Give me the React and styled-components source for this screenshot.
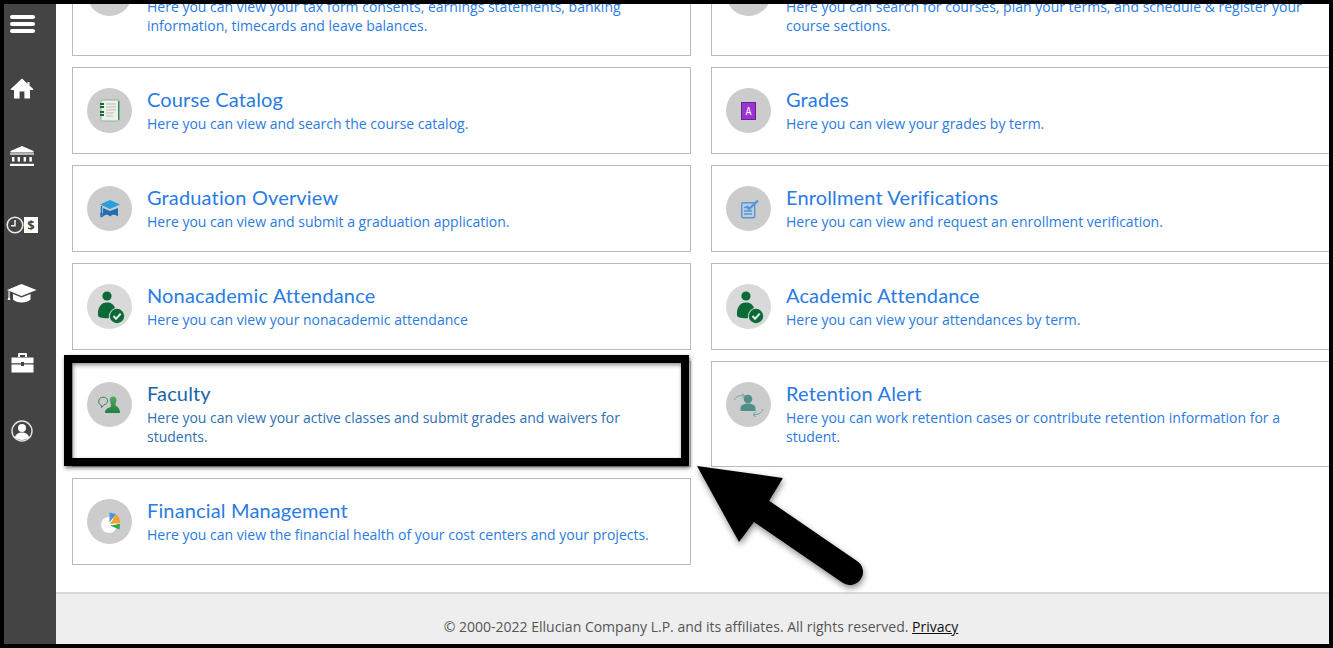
import React from "react";
import styled, { createGlobalStyle } from "styled-components";

const Global = createGlobalStyle`
  html, body { margin: 0; padding: 0; background: #000; }
  * { box-sizing: border-box; }
`;

const Frame = styled.div`
  position: relative;
  width: 1333px;
  height: 648px;
  border: 4px solid #000;
  display: flex;
  overflow: hidden;
  background: #fff;
  font-family: "Open Sans", "Liberation Sans", sans-serif;
`;

const Sidebar = styled.nav`
  width: 52px;
  flex: none;
  background: #444;
  display: flex;
  flex-direction: column;
`;

const MenuButton = styled.div`
  height: 50px;
  padding: 11px 0 0 6px;
  display: flex;
  flex-direction: column;
  gap: 3px;
`;

const MenuBar = styled.span`
  display: block;
  width: 25px;
  height: 4px;
  border-radius: 2px;
  background: #fff;
`;

const NavItem = styled.div`
  height: 68.6px;
  flex: none;
  padding-right: 16px;
  display: flex;
  align-items: center;
  justify-content: center;
  svg { display: block; flex: none; }
`;

const Main = styled.main`
  flex: 1;
  min-width: 0;
  display: flex;
  flex-direction: column;
  overflow: hidden;
`;

const Scroller = styled.div`
  flex: 1;
  min-height: 0;
  overflow: hidden;
`;

const Grid = styled.div`
  margin-top: -54px;
  padding-left: 16px;
  display: grid;
  grid-template-columns: 619px 619px;
  column-gap: 20px;
  row-gap: 11px;
  align-items: start;
`;

const Card = styled.a`
  position: relative;
  display: flex;
  gap: 15px;
  padding: 20px 14px;
  border: 1px solid #bbb;
  background: #fff;
  text-decoration: none;

  ${(p) =>
    p.$marked &&
    `
    &::after {
      content: "";
      box-sizing: border-box;
      position: absolute;
      left: -9px;
      top: -7px;
      width: 625px;
      height: 111px;
      border: 8.5px solid #000;
      box-shadow: 1px 2px 4px rgba(0,0,0,.55), inset 1px 2px 4px rgba(0,0,0,.45);
      pointer-events: none;
    }
  `}
`;

const IconCircle = styled.div`
  width: 45px;
  height: 45px;
  flex: none;
  border-radius: 50%;
  background: ${(p) => p.$bg || "#cccccc"};
  svg { display: block; }
`;

const CardText = styled.div`
  min-width: 0;
  flex: 1;
`;

const CardTitle = styled.div`
  font-family: Lato, "Open Sans", sans-serif;
  font-size: 20px;
  font-weight: 400;
  line-height: 22px;
  margin-bottom: 4px;
  letter-spacing: 0.15px;
  color: ${(p) => (p.$dim ? "#1a64a8" : "#2a7be4")};
`;

const CardDesc = styled.div`
  font-size: 14px;
  line-height: 19px;
  color: ${(p) => (p.$dim ? "#2f6fb4" : "#2b7be0")};
`;

const Footer = styled.footer`
  flex: none;
  height: 52px;
  background: #eee;
  border-top: 2px solid #d9d9d9;
  padding: 23px 0 0 17px;
  text-align: center;
  font-size: 14px;
  line-height: 19px;
  color: #555;
`;

const PrivacyLink = styled.a`
  color: #111;
  text-decoration: underline;
`;

const ArrowDrawing = styled.svg`
  position: absolute;
  left: 692px;
  top: 458px;
  width: 180px;
  height: 130px;
  overflow: visible;
  filter: drop-shadow(1px 3px 3px rgba(0, 0, 0, 0.45));
`;

const Nav = {
  Home: () => (
    <svg width="24" height="21" viewBox="0 0 24 21" fill="#fff">
      <path d="M12 0.5 L0.8 11 Q0.5 11.8 1.2 12 H4 V20.5 H9.6 V13.5 H14.4 V20.5 H20 V12 H22.8 Q23.5 11.8 23.2 11 L19.5 7.5 V4 H17.5 V5.7Z" />
    </svg>
  ),
  Bank: () => (
    <svg width="26" height="21" viewBox="0 0 26 21" fill="#fff">
      <path d="M13 0 L24.5 5 V6.4 H1.5 V5Z" />
      <rect x="1" y="7.4" width="24" height="1.2" />
      <rect x="3" y="11" width="2.4" height="4.6" />
      <rect x="8.6" y="11" width="2.4" height="4.6" />
      <rect x="14.6" y="11" width="2.4" height="4.6" />
      <rect x="20.4" y="11" width="2.4" height="4.6" />
      <rect x="1" y="17.8" width="24" height="2.2" />
    </svg>
  ),
  Pay: () => (
    <svg width="32" height="18" viewBox="0 0 32 18">
      <circle cx="9" cy="9" r="7.8" fill="none" stroke="#e8e8e8" strokeWidth="1.6" />
      <path d="M9 4 V9.8 H5" fill="none" stroke="#e8e8e8" strokeWidth="1.6" />
      <rect x="18" y="1" width="14" height="16" fill="#fff" />
      <text x="25" y="14" textAnchor="middle" fontSize="13" fontWeight="700" fontFamily="Open Sans" fill="#444">$</text>
    </svg>
  ),
  Cap: () => (
    <svg width="30" height="20" viewBox="0 0 30 20" fill="#fff">
      <path d="M14.5 0 L29.5 6 L14.5 12 L0 6Z" />
      <path d="M6 10 L14.5 13.6 L23.5 10 V15.5 C20 19.5 9.5 19.5 6 15.5Z" />
      <path d="M1.5 7 L2.6 7.4 V13 L3.4 16 H0.6 L1.5 13Z" />
    </svg>
  ),
  Case: () => (
    <svg width="23" height="20" viewBox="0 0 23 20" fill="#fff">
      <path d="M7 4 V1.2 Q7 0 8.2 0 H14.8 Q16 0 16 1.2 V4 H14 V2 H9 V4Z" />
      <path d="M0.5 4.5 H22.5 V10.3 H13 V9 H10 V10.3 H0.5Z" />
      <path d="M0.5 11.5 H10 V13 H13 V11.5 H22.5 V19.5 H0.5Z" />
    </svg>
  ),
  User: () => (
    <svg width="22" height="22" viewBox="0 0 22 22">
      <circle cx="11" cy="11" r="10" fill="none" stroke="#e4e4e4" strokeWidth="1.4" />
      <circle cx="11" cy="8" r="4" fill="#fff" />
      <path d="M3.8 17.5 C5 13.5 8 12.5 11 12.5 C14 12.5 17 13.5 18.2 17.5 C14.5 20.8 7.5 20.8 3.8 17.5Z" fill="#fff" />
    </svg>
  ),
};

const Art = ({ children }) => (
  <svg width="45" height="45" viewBox="0 0 45 45">{children}</svg>
);

const Icons = {
  Money: () => <Art />,
  Register: () => <Art />,
  Catalog: () => (
    <Art>
      <rect x="14" y="12" width="18" height="21" rx="1.5" fill="#eef1ea" stroke="#8cb596" strokeWidth="1" />
      <rect x="31" y="13" width="1.3" height="19" fill="#2e8b57" />
      <path d="M13 16 H17 M13 19 H17 M13 24 H17 M13 27 H17" stroke="#146b34" strokeWidth="2" />
      <path d="M19 16 H29 M19 19 H29 M19 22 H29 M19 25 H27 M19 28 H26" stroke="#b9bdb9" strokeWidth="1" />
    </Art>
  ),
  Grades: () => (
    <Art>
      <rect x="15.5" y="14.5" width="14" height="17" fill="#9a33cf" stroke="#6a1f9a" strokeWidth="1" />
      <text x="22.5" y="27" textAnchor="middle" fontSize="10" fontFamily="DejaVu Sans Mono" fill="#fff">A</text>
    </Art>
  ),
  Graduation: () => (
    <Art>
      <path d="M16 22 V30.5 C19 28 21 28.5 23 30.5 C25 28.5 28 28 31 30.5 V22 L23 25Z" fill="#1f6fb0" />
      <path d="M23 14 L33 18.5 L23 23 L13 18.5Z" fill="#2a9fe0" />
      <path d="M14.5 20 V28" stroke="#1f6fb0" strokeWidth="1.4" />
      <rect x="13.3" y="27" width="2.4" height="4.2" fill="#1f6fb0" />
    </Art>
  ),
  Enrollment: () => (
    <Art>
      <rect x="15.7" y="16.7" width="13" height="15" rx="1.5" fill="#b9cde3" stroke="#5b93cf" strokeWidth="1.4" />
      <path d="M18 21.5 H23 M18 25 H26 M18 28 H26" stroke="#5b93cf" strokeWidth="1.3" />
      <path d="M20.5 20 L23 23 L32 14.5" fill="none" stroke="#4f97dd" strokeWidth="2.4" />
    </Art>
  ),
  Attendance: () => (
    <Art>
      <circle cx="20" cy="12" r="4.6" fill="#0b6a38" />
      <path d="M11 32 C10.5 23 14 18.5 20 18.5 C24 18.5 27 20.5 28 24 C24 25.5 21.5 29 22 34 C17 34.5 13 34 11 32Z" fill="#0b6a38" />
      <circle cx="30" cy="32" r="7.2" fill="#0b6a38" />
      <path d="M26.5 32 L29 34.8 L33.7 29.6" fill="none" stroke="#e8f0ea" strokeWidth="2" />
    </Art>
  ),
  Faculty: () => (
    <Art>
      <defs>
        <linearGradient id="fac" x1="0" y1="0" x2="0" y2="1">
          <stop offset="0" stopColor="#58a860" />
          <stop offset="1" stopColor="#1c8040" />
        </linearGradient>
      </defs>
      <path d="M14.5 23.5 C11.8 22.5 11.3 20 12 18 C13.2 14.5 18.5 14.5 20 17 C21.3 19.5 19.8 22.5 17 22.8 L14.5 25.5Z" fill="none" stroke="#2f8a58" strokeWidth="1" />
      <path d="M26 14.5 C29 14.5 29.8 17 29.3 19.5 C29 21 28.3 22 28.3 23 C29 24.5 33 25 33 31 H18 C18 27 21 26 23.5 25 C24.5 24 24 22 23.5 21 C22.5 18 22.5 14.5 26 14.5Z" fill="url(#fac)" />
    </Art>
  ),
  Retention: () => (
    <Art>
      <circle cx="22" cy="17" r="4.3" fill="#4f9088" />
      <path d="M14.5 29 V26.5 C14.5 23 18 21.5 22 21.5 C26 21.5 29.5 23 29.5 26.5 V29Z" fill="#4f9088" />
      <path d="M8.5 18 C10 14 14 13 18.5 14 M16 11.5 L19 14 L16 16.5" fill="none" stroke="#6ea79f" strokeWidth="1" />
      <path d="M37 27 C36 31 32 33 27.5 32.5 M30 30 L27 32.5 L30 35" fill="none" stroke="#6ea79f" strokeWidth="1" />
    </Art>
  ),
  Financial: () => (
    <Art>
      <circle cx="22" cy="26" r="8" fill="#fff" />
      <path d="M22.5 23.5 L22.5 13.5 L29 15 Z" fill="#4f94d8" />
      <path d="M23 25 L29.2 15.5 C32 17.5 33.5 21 33 24 Z" fill="#f4a22c" />
      <path d="M23 26.5 L33 25 L32.5 30.5 Z" fill="#2aa84a" />
    </Art>
  ),
};

const cards = [
  { id: "b", icon: Icons.Money, desc: "Here you can view your tax form consents, earnings statements, banking information, timecards and leave balances." },
  { id: "s", icon: Icons.Register, desc: "Here you can search for courses, plan your terms, and schedule & register your course sections." },
  { id: "c", icon: Icons.Catalog, title: "Course Catalog", desc: "Here you can view and search the course catalog." },
  { id: "g", icon: Icons.Grades, title: "Grades", desc: "Here you can view your grades by term." },
  { id: "o", icon: Icons.Graduation, title: "Graduation Overview", desc: "Here you can view and submit a graduation application." },
  { id: "e", icon: Icons.Enrollment, title: "Enrollment Verifications", desc: "Here you can view and request an enrollment verification." },
  { id: "n", icon: Icons.Attendance, bg: "#d9d9d9", title: "Nonacademic Attendance", desc: "Here you can view your nonacademic attendance" },
  { id: "a", icon: Icons.Attendance, bg: "#d9d9d9", title: "Academic Attendance", desc: "Here you can view your attendances by term." },
  { id: "f", icon: Icons.Faculty, marked: true, title: "Faculty", desc: "Here you can view your active classes and submit grades and waivers for students." },
  { id: "r", icon: Icons.Retention, title: "Retention Alert", desc: "Here you can work retention cases or contribute retention information for a student." },
  { id: "m", icon: Icons.Financial, title: "Financial Management", desc: "Here you can view the financial health of your cost centers and your projects." },
];

export default function App() {
  return (
    <>
      <Global />
      <Frame>
        <Sidebar>
          <MenuButton>
            <MenuBar />
            <MenuBar />
            <MenuBar />
          </MenuButton>
          <NavItem><Nav.Home /></NavItem>
          <NavItem><Nav.Bank /></NavItem>
          <NavItem><Nav.Pay /></NavItem>
          <NavItem><Nav.Cap /></NavItem>
          <NavItem><Nav.Case /></NavItem>
          <NavItem><Nav.User /></NavItem>
        </Sidebar>
        <Main>
          <Scroller>
            <Grid>
              {cards.map(({ id, icon: Icon, bg, title, desc, marked }) => (
                <Card key={id} $marked={marked}>
                  <IconCircle $bg={bg}><Icon /></IconCircle>
                  <CardText>
                    <CardTitle $dim={marked}>{title || "\u00a0"}</CardTitle>
                    <CardDesc $dim={marked}>{desc}</CardDesc>
                  </CardText>
                </Card>
              ))}
            </Grid>
          </Scroller>
          <Footer>
            © 2000-2022 Ellucian Company L.P. and its affiliates. All rights reserved. <PrivacyLink>Privacy</PrivacyLink>
          </Footer>
        </Main>
        <ArrowDrawing viewBox="696 462 180 130">
          <path d="M697 466 L783 478 L769 501 L754 522 L739 542Z" fill="#000" />
          <path d="M761 511 L850 572" stroke="#000" strokeWidth="26" strokeLinecap="round" fill="none" />
        </ArrowDrawing>
      </Frame>
    </>
  );
}
